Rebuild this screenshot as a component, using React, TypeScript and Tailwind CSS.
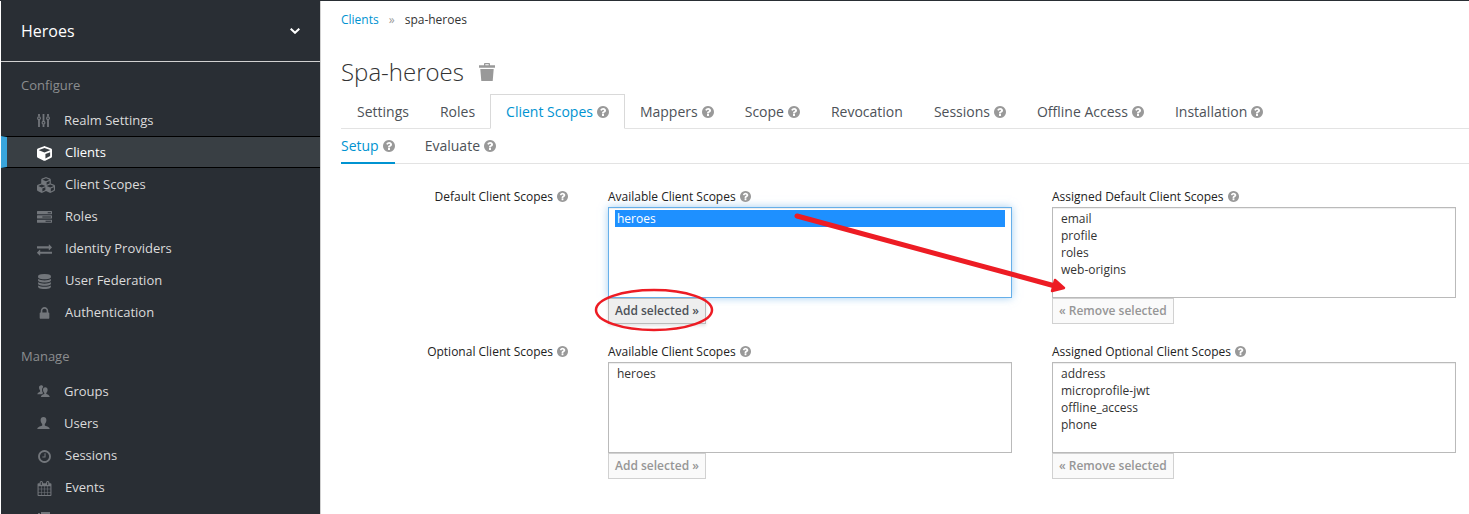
import { ReactNode } from "react";
import { FaCube, FaCubes } from "react-icons/fa";
import clsx from "clsx";

const PATHS = {
  help: "M1024 1376v-192q0-14-9-23t-23-9h-192q-14 0-23 9t-9 23v192q0 14 9 23t23 9h192q14 0 23-9t9-23zm256-672q0-88-55.5-163t-138.5-116-170-41q-243 0-371 213-15 24 8 42l132 100q7 6 19 6 16 0 25-12 53-68 86-92 34-24 86-24 48 0 85.5 26t37.5 59q0 38-20 61t-68 45q-63 28-115.5 86.5t-52.5 125.5v36q0 14 9 23t23 9h192q14 0 23-9t9-23q0-19 21.5-49.5t54.5-49.5q32-18 49-28.5t46-35 44.5-48 28-60.5 12.5-81zm384 192q0 209-103 385.5t-279.5 279.5-385.5 103-385.5-103-279.5-279.5-103-385.5 103-385.5 279.5-279.5 385.5-103 385.5 103 279.5 279.5 103 385.5z",
  clock: "M1024 544v448q0 14-9 23t-23 9h-320q-14 0-23-9t-9-23v-64q0-14 9-23t23-9h224v-352q0-14 9-23t23-9h64q14 0 23 9t9 23zm416 352q0-148-73-273t-198-198-273-73-273 73-198 198-73 273 73 273 198 198 273 73 273-73 198-198 73-273zm224 0q0 209-103 385.5t-279.5 279.5-385.5 103-385.5-103-279.5-279.5-103-385.5 103-385.5 279.5-279.5 385.5-103 385.5 103 279.5 279.5 103 385.5z",
  calendar: "M192 1664h288v-288h-288v288zm352 0h320v-288h-320v288zm-352-352h288v-320h-288v320zm352 0h320v-320h-320v320zm-352-384h288v-288h-288v288zm736 736h320v-288h-320v288zm-384-736h320v-288h-320v288zm768 736h288v-288h-288v288zm-384-352h320v-320h-320v320zm-352-864v-288q0-13-9.5-22.5t-22.5-9.5h-64q-13 0-22.5 9.5t-9.5 22.5v288q0 13 9.5 22.5t22.5 9.5h64q13 0 22.5-9.5t9.5-22.5zm736 864h288v-320h-288v320zm-384-384h320v-288h-320v288zm384 0h288v-288h-288v288zm32-480v-288q0-13-9.5-22.5t-22.5-9.5h-64q-13 0-22.5 9.5t-9.5 22.5v288q0 13 9.5 22.5t22.5 9.5h64q13 0 22.5-9.5t9.5-22.5zm384-64v1280q0 52-38 90t-90 38h-1408q-52 0-90-38t-38-90v-1280q0-52 38-90t90-38h128v-96q0-66 47-113t113-47h64q66 0 113 47t47 113v96h384v-96q0-66 47-113t113-47h64q66 0 113 47t47 113v96h128q52 0 90 38t38 90z",
  database: "M896 768q237 0 443-43t325-127v170q0 69-103 128t-280 93.5-385 34.5-385-34.5-280-93.5-103-128v-170q119 84 325 127t443 43zm0 768q237 0 443-43t325-127v170q0 69-103 128t-280 93.5-385 34.5-385-34.5-280-93.5-103-128v-170q119 84 325 127t443 43zm0-384q237 0 443-43t325-127v170q0 69-103 128t-280 93.5-385 34.5-385-34.5-280-93.5-103-128v-170q119 84 325 127t443 43zm0-1152q208 0 385 34.5t280 93.5 103 128v128q0 69-103 128t-280 93.5-385 34.5-385-34.5-280-93.5-103-128v-128q0-69 103-128t280-93.5 385-34.5z",
  exchange: "M1792 1184v192q0 13-9.5 22.5t-22.5 9.5h-1376v192q0 13-9.5 22.5t-22.5 9.5q-12 0-24-10l-319-320q-9-9-9-22 0-14 9-23l320-320q9-9 23-9 13 0 22.5 9.5t9.5 22.5v192h1376q13 0 22.5 9.5t9.5 22.5zm0-544q0 14-9 23l-320 320q-9 9-23 9-13 0-22.5-9.5t-9.5-22.5v-192h-1376q-13 0-22.5-9.5t-9.5-22.5v-192q0-13 9.5-22.5t22.5-9.5h1376v-192q0-14 9-23t23-9q12 0 24 10l319 319q9 9 9 23z",
  tasks: "M1024 1408h640v-128h-640v128zm-384-512h1024v-128h-1024v128zm640-512h384v-128h-384v128zm512 832v256q0 26-19 45t-45 19h-1664q-26 0-45-19t-19-45v-256q0-26 19-45t45-19h1664q26 0 45 19t19 45zm0-512v256q0 26-19 45t-45 19h-1664q-26 0-45-19t-19-45v-256q0-26 19-45t45-19h1664q26 0 45 19t19 45zm0-512v256q0 26-19 45t-45 19h-1664q-26 0-45-19t-19-45v-256q0-26 19-45t45-19h1664q26 0 45 19t19 45z",
  lock: "M640 768h512v-192q0-106-75-181t-181-75-181 75-75 181v192zm832 96v576q0 40-28 68t-68 28h-960q-40 0-68-28t-28-68v-576q0-40 28-68t68-28h32v-192q0-184 132-316t316-132 316 132 132 316v192h32q40 0 68 28t28 68z",
};

function Glyph({ name }: { name: keyof typeof PATHS }) {
  return (
    <svg viewBox="0 0 1792 1792" className="size-[15px] shrink-0" fill="currentColor" aria-hidden="true">
      <path d={PATHS[name]} />
    </svg>
  );
}

function Help({ small }: { small?: boolean }) {
  return (
    <svg
      viewBox="128 128 1536 1536"
      className={clsx("inline-block shrink-0 text-[#999999]", small ? "size-[11px]" : "size-3")}
      fill="currentColor"
      aria-hidden="true"
    >
      <path d={PATHS.help} />
    </svg>
  );
}

function Sliders() {
  return (
    <svg viewBox="0 0 13 13" className="size-[13px] shrink-0" fill="none" stroke="currentColor" aria-hidden="true">
      <path d="M2 0v2.6M2 5.8V13M6.5 0v7M6.5 10.4V13M11 0v2.6M11 5.8V13" strokeWidth="1.8" />
      <circle cx="2" cy="4.2" r="1.4" strokeWidth="1.2" />
      <circle cx="6.5" cy="8.7" r="1.4" strokeWidth="1.2" />
      <circle cx="11" cy="4.2" r="1.4" strokeWidth="1.2" />
    </svg>
  );
}

function Person() {
  return (
    <svg viewBox="0 0 13 13" className="size-[13px] shrink-0" fill="currentColor" aria-hidden="true">
      <path d="M6.5 0C4.7 0 3.6 1.2 3.6 3.1c0 1.7.6 3.2 1.6 4v1.5C4.4 9.2.6 9.7.3 12h12.4c-.3-2.3-4.1-2.8-4.9-3.4V7.1c1-.8 1.6-2.3 1.6-4C9.4 1.2 8.3 0 6.5 0z" />
    </svg>
  );
}

function People() {
  return (
    <svg viewBox="0 0 13 13" className="size-[13px] shrink-0" fill="currentColor" aria-hidden="true">
      <path d="M4.3.3c-1.500 0-2.300.9-2.300 2.300 0 1.200.4 2.200 1.100 2.800v1C2.500 7 .5 7.300.3 9.300h4.200c.5-.5 1.200-.8 1.700-1-.8-.9-1.200-2.100-1.200-3.500 0-1.200.4-2.200 1.200-2.900C6 .8 5.300.3 4.300.3z" />
      <path d="M8.300 2.200C6.800 2.200 6 3.200 6 4.700c0 1.400.5 2.500 1.300 3.200v1.200c-.7.5-3.300.8-3.500 2.900h9c-.2-2.100-2.800-2.400-3.500-2.900V7.900c.8-.7 1.300-1.800 1.300-3.200 0-1.500-.8-2.500-2.300-2.500z" />
    </svg>
  );
}

function ImportIcon() {
  return (
    <svg viewBox="0 0 15 15" className="size-[15px] shrink-0" fill="currentColor" aria-hidden="true">
      <path d="M4 0h9v12H4V8h3v2l4-4-4-4v2H4zM1 1h2v3H1z" />
    </svg>
  );
}

type Item = { label: string; icon: ReactNode; narrow?: boolean; active?: boolean; iconOnly?: boolean };

const CONFIGURE: Item[] = [
  { label: "Realm Settings", icon: <Sliders />, narrow: true },
  { label: "Clients", icon: <FaCube className="size-[15px] shrink-0" />, active: true },
  { label: "Client Scopes", icon: <FaCubes className="size-[18px] shrink-0" /> },
  { label: "Roles", icon: <Glyph name="tasks" /> },
  { label: "Identity Providers", icon: <Glyph name="exchange" /> },
  { label: "User Federation", icon: <Glyph name="database" /> },
  { label: "Authentication", icon: <Glyph name="lock" /> },
];

const MANAGE: Item[] = [
  { label: "Groups", icon: <People />, narrow: true },
  { label: "Users", icon: <Person />, narrow: true },
  { label: "Sessions", icon: <Glyph name="clock" /> },
  { label: "Events", icon: <Glyph name="calendar" /> },
  { label: "Import", icon: <ImportIcon />, narrow: true, iconOnly: true },
];

function NavGroup({ title, items }: { title: string; items: Item[] }) {
  return (
    <section className="pb-[9px]">
      <h2 className="px-5 text-[13px] leading-[38px] text-[#8b8d8f]">{title}</h2>
      <ul>
        {items.map((item) => (
          <li key={item.label}>
            <a
              href="#"
              aria-label={item.iconOnly ? item.label : undefined}
              aria-current={item.active ? "page" : undefined}
              className={clsx(
                "flex h-8 items-center gap-[13px] border-y pt-[2px] pr-5 text-[13px]",
                item.active
                  ? "border-y-black border-l-6 border-l-[#39a5dc] bg-[#393f44] pl-[30px] text-white"
                  : "border-y-transparent pl-9 text-[#dbdbdb]",
              )}
            >
              <span
                className={clsx(
                  "flex shrink-0",
                  item.narrow ? "w-[14px] pb-[2px]" : "w-[15px]",
                  item.active ? "text-white" : "text-[#72767b]",
                )}
              >
                {item.icon}
              </span>
              {!item.iconOnly && item.label}
            </a>
          </li>
        ))}
      </ul>
    </section>
  );
}

const TABS = [
  { label: "Settings" },
  { label: "Roles" },
  { label: "Client Scopes", help: true, active: true },
  { label: "Mappers", help: true },
  { label: "Scope", help: true },
  { label: "Revocation" },
  { label: "Sessions", help: true },
  { label: "Offline Access", help: true },
  { label: "Installation", help: true },
];

type PickerProps = {
  id: string;
  label: string;
  options: string[];
  selected?: string[];
  action: ReactNode;
  enabled?: boolean;
};

function Picker({ id, label, options, selected = [], action, enabled }: PickerProps) {
  return (
    <div className="min-w-0">
      <label htmlFor={id} className="flex h-[21px] items-center gap-1 text-xs font-medium text-[#222222]">
        {label}
        <Help small />
      </label>
      <select
        id={id}
        multiple
        size={5}
        defaultValue={selected}
        className={clsx(
          "block h-[91px] w-full overflow-hidden border bg-white px-[6px] py-[2px] text-xs text-[#333333] outline-none",
          enabled
            ? "border-[#66afe9] shadow-[inset_0_1px_1px_rgba(0,0,0,0.075),0_0_8px_rgba(102,175,233,0.6)]"
            : "border-[#bababa] shadow-[inset_0_1px_1px_rgba(0,0,0,0.075)]",
        )}
      >
        {options.map((o) => (
          <option
            key={o}
            value={o}
            className="h-[17px] min-h-0 px-[2px] py-0 leading-[17px] checked:bg-linear-to-r checked:from-[#1e90ff] checked:to-[#1e90ff] checked:[-webkit-text-fill-color:#ffffff]"
          >
            {o}
          </option>
        ))}
      </select>
      <button
        type="button"
        disabled={!enabled}
        className={clsx(
          "block h-[26px] border px-[6px] text-xs font-semibold",
          enabled
            ? "border-[#bbbbbb] bg-[#eeeeee] text-[#4d5258] shadow-[0_2px_3px_rgba(0,0,0,0.1)]"
            : "border-[#d1d1d1] bg-[#fafafa] text-[#969696]",
        )}
      >
        {action}
      </button>
    </div>
  );
}

function ScopeRow({ title, children }: { title: string; children: ReactNode }) {
  return (
    <div className="grid grid-cols-[227px_minmax(0,1fr)_minmax(0,1fr)] gap-x-10">
      <div className="flex h-[21px] items-center justify-end gap-1 text-xs font-medium text-[#222222]">
        {title}
        <Help small />
      </div>
      {children}
    </div>
  );
}

export default function App() {
  return (
    <div className="flex h-screen overflow-hidden border-t border-[#292e34] bg-white pl-px font-['Open_Sans',sans-serif]">
      <aside className="w-80 shrink-0 overflow-hidden border-r border-[#d1d1d1] bg-[#292e34]">
        <button
          type="button"
          className="mb-1 flex h-[61px] w-full items-center justify-between border-b border-[#d1d1d1] px-5 text-base text-white"
        >
          Heroes
          <svg viewBox="0 0 10 6" className="h-[6px] w-[10px]" fill="none" stroke="currentColor" strokeWidth="2" aria-hidden="true">
            <path d="M.7.7 5 4.8 9.3.7" />
          </svg>
        </button>
        <NavGroup title="Configure" items={CONFIGURE} />
        <NavGroup title="Manage" items={MANAGE} />
      </aside>

      <main className="relative min-w-0 flex-1 pl-5">
        <nav aria-label="Breadcrumb" className="flex h-[38px] items-center text-xs text-[#333333]">
          <a href="#" className="text-[#0093d1]">Clients</a>
          <span className="px-[10px] text-[#9c9c9c]">»</span>
          <span>spa-heroes</span>
        </nav>

        <div className="flex h-[55px] items-center gap-[15px] pt-[10px]">
          <h1 className="text-2xl font-light text-[#333333]">Spa-heroes</h1>
          <button type="button" aria-label="Delete client" className="text-[#999999]">
            <svg viewBox="0 0 16 18" className="h-[18px] w-4" fill="currentColor" aria-hidden="true">
              <path d="M0 2.3h5V1.1C5 .4 5.400 0 6 0h4c.6 0 1 .4 1 1.100v1.200h5v2.500H0zM6.300 1.300v1h3.400v-1zM1.300 6h13.400l-1 12H2.300z" />
            </svg>
          </button>
        </div>

        <nav aria-label="Client sections" className="flex h-[35px] border-b border-[#e3e3e3] pl-px text-sm">
          {TABS.map((t) => (
            <a
              key={t.label}
              href="#"
              className={clsx(
                "-mb-px -ml-px flex items-center gap-1 border px-[15px] whitespace-nowrap",
                t.active ? "border-[#d9d9d9] border-b-white bg-white text-[#0093d1]" : "border-transparent text-[#4d5258]",
              )}
            >
              {t.label}
              {t.help && <Help />}
            </a>
          ))}
        </nav>

        <nav aria-label="Scope views" className="flex h-[35px] gap-[30px] border-b border-[#e3e3e3] text-sm">
          <a href="#" className="-mb-px flex items-center gap-1 border-b-2 border-[#0093d1] text-[#0093d1]">
            Setup
            <Help />
          </a>
          <a href="#" className="-mb-px flex items-center gap-1 border-b-2 border-transparent text-[#4d5258]">
            Evaluate
            <Help />
          </a>
        </nav>

        <form className="flex flex-col gap-[17px] pt-[22px] pr-[13px]">
          <ScopeRow title="Default Client Scopes">
            <Picker
              id="available-default"
              label="Available Client Scopes"
              options={["heroes"]}
              selected={["heroes"]}
              action="Add selected »"
              enabled
            />
            <Picker
              id="assigned-default"
              label="Assigned Default Client Scopes"
              options={["email", "profile", "roles", "web-origins"]}
              action="« Remove selected"
            />
          </ScopeRow>
          <ScopeRow title="Optional Client Scopes">
            <Picker id="available-optional" label="Available Client Scopes" options={["heroes"]} action="Add selected »" />
            <Picker
              id="assigned-optional"
              label="Assigned Optional Client Scopes"
              options={["address", "microprofile-jwt", "offline_access", "phone"]}
              action="« Remove selected"
            />
          </ScopeRow>
        </form>

        <svg
          viewBox="0 0 480 150"
          className="pointer-events-none absolute top-[199px] left-[269px] h-[150px] w-[480px]"
          fill="none"
          stroke="#ed1c24"
          aria-hidden="true"
        >
          <ellipse cx="64" cy="110" rx="58" ry="20" strokeWidth="2.5" />
          <path d="M207 16 465 86" strokeWidth="5" strokeLinecap="round" />
          <path d="m465 80 9 8-12 3z" fill="#ed1c24" strokeWidth="2.5" strokeLinejoin="round" />
        </svg>
      </main>
    </div>
  );
}
